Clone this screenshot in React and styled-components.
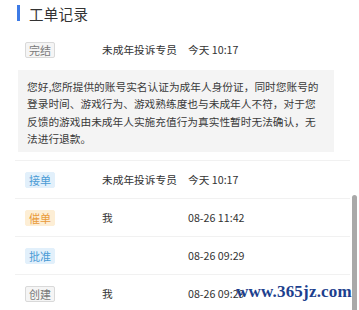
import styled, { createGlobalStyle } from "styled-components";

const GlobalStyle = createGlobalStyle`
  html, body {
    margin: 0;
    padding: 0;
    background: #fff;
    font-family: "Noto Sans CJK SC", "Noto Sans", sans-serif;
    color: #333;
  }
`;

const tones = {
  gray: { bg: "#f5f5f5", fg: "#7a7a7a", border: "#d9d9d9" },
  blue: { bg: "#e2f0fb", fg: "#4b9bd5", border: "#e2f0fb" },
  orange: { bg: "#fdeed5", fg: "#e99a3a", border: "#fdeed5" },
};

const records = [
  {
    label: "完结",
    tone: "gray",
    who: "未成年投诉专员",
    time: "今天 10:17",
    reply:
      "您好,您所提供的账号实名认证为成年人身份证，同时您账号的登录时间、游戏行为、游戏熟练度也与未成年人不符，对于您反馈的游戏由未成年人实施充值行为真实性暂时无法确认，无法进行退款。",
  },
  { label: "接单", tone: "blue", who: "未成年投诉专员", time: "今天 10:17" },
  { label: "催单", tone: "orange", who: "我", time: "08-26 11:42" },
  { label: "批准", tone: "blue", who: "", time: "08-26 09:29" },
  { label: "创建", tone: "gray", who: "我", time: "08-26 09:29" },
];

const App = () => {
  return (
    <Page>
      <GlobalStyle />
      <Header>
        <Bar />
        <Title>工单记录</Title>
      </Header>
      <List>
        {records.map((r, i) => (
          <Record key={i} $last={i === records.length - 1} $hasReply={!!r.reply}>
            <Row>
              <BadgeCell>
                <Badge $tone={r.tone}>{r.label}</Badge>
              </BadgeCell>
              <Who>{r.who}</Who>
              <Time>{r.time}</Time>
            </Row>
            {r.reply && <Reply>{r.reply}</Reply>}
          </Record>
        ))}
      </List>
      <Thumb />
      <Watermark>www.365jz.com</Watermark>
    </Page>
  );
};

const Page = styled.div`
  position: relative;
  width: 359px;
  height: 310px;
  overflow: hidden;
  background: #fff;
`;

const Header = styled.div`
  display: flex;
  align-items: center;
  gap: 9px;
  height: 26px;
  padding-left: 17px;
`;

const Bar = styled.span`
  width: 3px;
  height: 16px;
  background: #3d7be6;
`;

const Title = styled.h2`
  margin: 0;
  font-size: 14.5px;
  font-weight: 400;
  color: #333;
  letter-spacing: 0.3px;
`;

const List = styled.div`
  margin: 5px 9px 0 15px;
`;

const Record = styled.div`
  border-bottom: ${(p) => (p.$last ? "none" : "1px solid #f1f1f1")};
  padding-bottom: ${(p) => (p.$hasReply ? "8px" : "0")};
`;

const Row = styled.div`
  display: flex;
  align-items: center;
  height: 37px;
  font-size: 10.7px;
  color: #333;
`;

const BadgeCell = styled.div`
  width: 87px;
  padding-left: 10px;
  box-sizing: border-box;
  flex-shrink: 0;
`;

const Badge = styled.span`
  display: inline-flex;
  align-items: center;
  height: 16px;
  padding: 0 3px;
  box-sizing: border-box;
  border-radius: 2px;
  font-size: 11px;
  background: ${(p) => tones[p.$tone].bg};
  color: ${(p) => tones[p.$tone].fg};
  border: 1px solid ${(p) => tones[p.$tone].border};
`;

const Who = styled.span`
  width: 86px;
  flex-shrink: 0;
`;

const Time = styled.span`
  white-space: nowrap;
`;

const Reply = styled.div`
  margin: 2px 0 0 3px;
  width: 316px;
  box-sizing: border-box;
  padding: 8px 11px 5px 9px;
  background: #f4f4f4;
  font-size: 10.7px;
  line-height: 17.3px;
  color: #3a3a3a;
`;

const Thumb = styled.div`
  position: absolute;
  left: 352px;
  top: 195px;
  width: 5px;
  height: 130px;
  border-radius: 3px;
  background: #a9a9a9;
`;

const Watermark = styled.div`
  position: absolute;
  left: 236px;
  top: 282px;
  font-family: "Liberation Serif", serif;
  font-weight: 700;
  font-size: 17px;
  color: #1d3f8e;
  letter-spacing: 0.2px;
`;

export default App;
